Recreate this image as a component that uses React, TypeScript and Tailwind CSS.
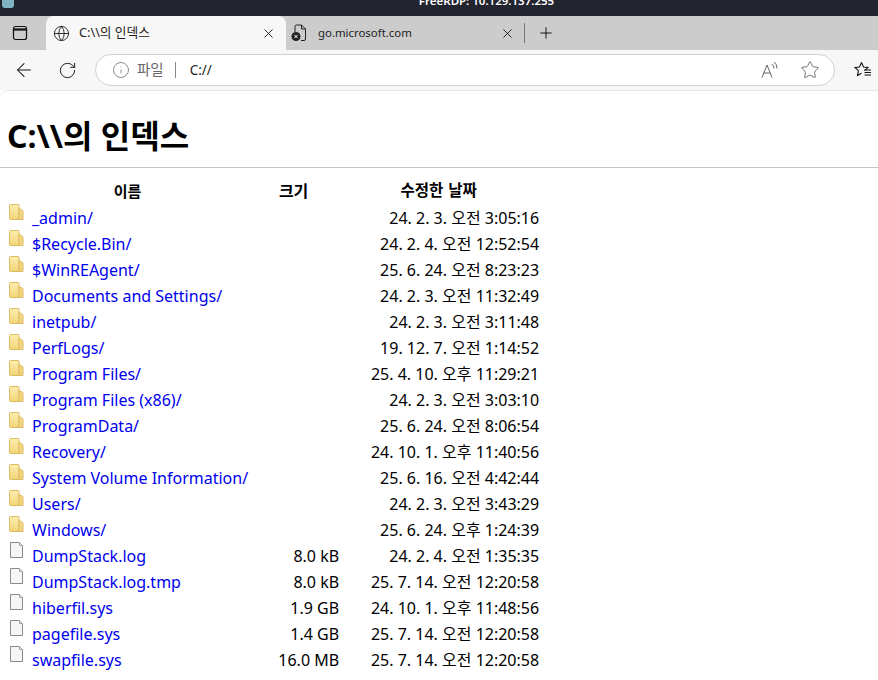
import { Globe, Info, Plus, RotateCw, Star, X, ArrowLeft } from "lucide-react";

const rows = [
  { name: "_admin/", size: "", date: "24. 2. 3. 오전 3:05:16", dir: true },
  { name: "$Recycle.Bin/", size: "", date: "24. 2. 4. 오전 12:52:54", dir: true },
  { name: "$WinREAgent/", size: "", date: "25. 6. 24. 오전 8:23:23", dir: true },
  { name: "Documents and Settings/", size: "", date: "24. 2. 3. 오전 11:32:49", dir: true },
  { name: "inetpub/", size: "", date: "24. 2. 3. 오전 3:11:48", dir: true },
  { name: "PerfLogs/", size: "", date: "19. 12. 7. 오전 1:14:52", dir: true },
  { name: "Program Files/", size: "", date: "25. 4. 10. 오후 11:29:21", dir: true },
  { name: "Program Files (x86)/", size: "", date: "24. 2. 3. 오전 3:03:10", dir: true },
  { name: "ProgramData/", size: "", date: "25. 6. 24. 오전 8:06:54", dir: true },
  { name: "Recovery/", size: "", date: "24. 10. 1. 오후 11:40:56", dir: true },
  { name: "System Volume Information/", size: "", date: "25. 6. 16. 오전 4:42:44", dir: true },
  { name: "Users/", size: "", date: "24. 2. 3. 오전 3:43:29", dir: true },
  { name: "Windows/", size: "", date: "25. 6. 24. 오후 1:24:39", dir: true },
  { name: "DumpStack.log", size: "8.0 kB", date: "24. 2. 4. 오전 1:35:35", dir: false },
  { name: "DumpStack.log.tmp", size: "8.0 kB", date: "25. 7. 14. 오전 12:20:58", dir: false },
  { name: "hiberfil.sys", size: "1.9 GB", date: "24. 10. 1. 오후 11:48:56", dir: false },
  { name: "pagefile.sys", size: "1.4 GB", date: "25. 7. 14. 오전 12:20:58", dir: false },
  { name: "swapfile.sys", size: "16.0 MB", date: "25. 7. 14. 오전 12:20:58", dir: false },
];

function FolderIcon() {
  return (
    <svg width="15" height="16" viewBox="0 0 15 16" className="block">
      <defs>
        <linearGradient id="folderFill" x1="0" y1="0" x2="0" y2="1">
          <stop offset="0" stopColor="#fbeeb0" />
          <stop offset="1" stopColor="#f2d476" />
        </linearGradient>
      </defs>
      <path d="M0.5 1.5 Q0.5 0.5 1.5 0.5 H9 Q10 0.5 10 1.5 V15.5 H1.5 Q0.5 15.5 0.5 14.5 Z" fill="url(#folderFill)" stroke="#dcbc62" />
      <path d="M10 4.5 L13 6 Q14 6.5 14 7.5 V15.5 H10 Z" fill="#f3d67f" stroke="#dcbc62" />
    </svg>
  );
}

function FileIcon() {
  return (
    <svg width="15" height="16" viewBox="0 0 15 16" className="block">
      <path d="M1.5 0.5 H10.5 L13.5 3.5 V15.5 H1.5 Z" fill="#f6f6f6" stroke="#8a8a8a" />
      <path d="M10.5 0.5 V3.5 H13.5" fill="#e4e4e4" stroke="#a5a5a5" />
    </svg>
  );
}

function TabPanelIcon() {
  return (
    <svg width="16" height="16" viewBox="0 0 16 16" fill="none" stroke="#111" strokeWidth="1.2">
      <rect x="1.5" y="1.5" width="13" height="13" rx="2" />
      <path d="M1.5 4.5 H14.5" strokeWidth="2.2" />
    </svg>
  );
}

function BlockedPageIcon() {
  return (
    <svg width="16" height="18" viewBox="0 0 16 18" fill="none">
      <path d="M4 8 V2.5 Q4 1 5.5 1 H10.5 L14.5 5 V15 Q14.5 16.5 13 16.5 H10" stroke="#222" strokeWidth="1" />
      <path d="M10.5 1 V5 H14.5" stroke="#222" strokeWidth="1" />
      <circle cx="5" cy="12.5" r="4.5" fill="#222" />
      <path d="M3.4 10.9 L6.6 14.1 M6.6 10.9 L3.4 14.1" stroke="#fff" strokeWidth="1" />
    </svg>
  );
}

function ReadAloudIcon() {
  return (
    <svg width="18" height="18" viewBox="0 0 18 18" fill="none" stroke="#666" strokeWidth="1">
      <path d="M1 16.5 L6 4 L11 16.5 M2.8 12 H9.2" />
      <path d="M10.5 3 Q13 4.5 13 7.5 M13 1 Q16 3 16 7.5" />
    </svg>
  );
}

function FavoritesIcon() {
  return (
    <svg width="18" height="18" viewBox="0 0 18 18" fill="none" stroke="#111" strokeWidth="1.1">
      <path d="M7.5 1.5 L9.5 6 L14 6.5 L10.5 9.7 M7.5 1.5 L5.5 6 L1 6.5 L4.4 9.7 L3.5 14.5 L7.5 12.2" />
      <path d="M10.5 9 H17 M10.5 11.5 H17 M10.5 14 H17" />
    </svg>
  );
}

export default function App() {
  return (
    <div className="h-[680px] w-[878px] overflow-hidden bg-white font-['Noto_Sans','Noto_Sans_CJK_KR',sans-serif]">
      <div className="relative flex h-4 items-start justify-center overflow-hidden bg-[#22252f] pl-[95px]">
        <span className="relative top-[-7px] text-[11.5px] leading-[16px] font-semibold text-white">FreeRDP: 10.129.137.255</span>
        <span className="absolute top-0 left-[2px] h-[8px] w-[12px] rounded-b-[3px] bg-[#7fb3c4]" />
      </div>

      <div className="flex h-[34px] items-end bg-[#cccccc]">
        <div className="flex h-full w-[46px] items-center pl-3">
          <TabPanelIcon />
        </div>
        <div className="flex h-full w-[240px] items-center rounded-t-[8px] bg-[#f7f7f7] pr-[10px] pl-[7px]">
          <Globe size={17} strokeWidth={1.2} className="text-[#111]" />
          <span className="ml-[9px] flex-1 text-[12.7px] text-[#222]">C:\\의 인덱스</span>
          <X size={15} strokeWidth={1.4} className="text-[#111]" />
        </div>
        <div className="flex h-full w-[238px] items-center pr-[9px] pl-[5px]">
          <BlockedPageIcon />
          <span className="ml-[11px] flex-1 text-[11.4px] text-[#222]">go.microsoft.com</span>
          <X size={15} strokeWidth={1.4} className="text-[#111]" />
        </div>
        <div className="mb-[7px] h-5 w-px bg-[#777]" />
        <div className="flex h-full items-center pl-[12px]">
          <Plus size={18} strokeWidth={1.2} className="text-[#000]" />
        </div>
      </div>

      <div className="flex h-10 items-center bg-[#f7f7f7]">
        <div className="flex w-[46px] justify-center pl-[1px]">
          <ArrowLeft size={22} strokeWidth={1.1} className="text-[#111]" />
        </div>
        <div className="flex w-[43px] justify-center">
          <RotateCw size={19} strokeWidth={1.2} className="text-[#111]" />
        </div>
        <div className="ml-[6px] flex h-8 w-[740px] items-center rounded-full border border-[#d0d0d0] bg-white pl-[16px]">
          <Info size={18} strokeWidth={1.1} className="text-[#777]" />
          <span className="ml-[7px] text-[14.5px] text-[#666]">파일</span>
          <span className="ml-[11px] h-4 w-px bg-[#888]" />
          <span className="ml-[14px] flex-1 text-[13.5px] text-[#222]">C://</span>
          <ReadAloudIcon />
          <Star size={20} strokeWidth={1} className="mr-[14px] ml-[21px] text-[#555]" />
        </div>
        <div className="ml-[19px]">
          <FavoritesIcon />
        </div>
      </div>

      <div className="rounded-tl-[8px] border-t border-[#e6e6e6] bg-white">
        <h1 className="mt-[21px] ml-[7px] text-[32px] leading-[48px] font-bold text-black">C:\\의 인덱스</h1>
        <hr className="mt-[7px] border-[#c4c4c4]" />
        <table className="mt-[11px] ml-2 border-collapse text-[16px] text-black">
          <thead>
            <tr className="h-[26px] text-[15px] font-bold">
              <th className="w-[239px] pr-[1px] pb-[2px] font-bold">이름</th>
              <th className="w-[91px] pb-[2px] text-[16px] font-bold">크기</th>
              <th className="w-[200px] pr-[1px] pb-[2px] text-center text-[15.5px] font-bold [word-spacing:1px]">수정한 날짜</th>
            </tr>
          </thead>
          <tbody>
            {rows.map((row) => (
              <tr key={row.name} className="h-[26px]">
                <td className="p-0 whitespace-nowrap">
                  <div className="flex items-start">
                    <span className="mt-[-1px] ml-[1px] w-[23px]">{row.dir ? <FolderIcon /> : <FileIcon />}</span>
                    <a href="#" className="leading-[26px] text-[#0000ee]">
                      {row.name}
                    </a>
                  </div>
                </td>
                <td className="p-0 text-right">{row.size}</td>
                <td className="p-0 text-right whitespace-nowrap">{row.date}</td>
              </tr>
            ))}
          </tbody>
        </table>
      </div>
    </div>
  );
}
